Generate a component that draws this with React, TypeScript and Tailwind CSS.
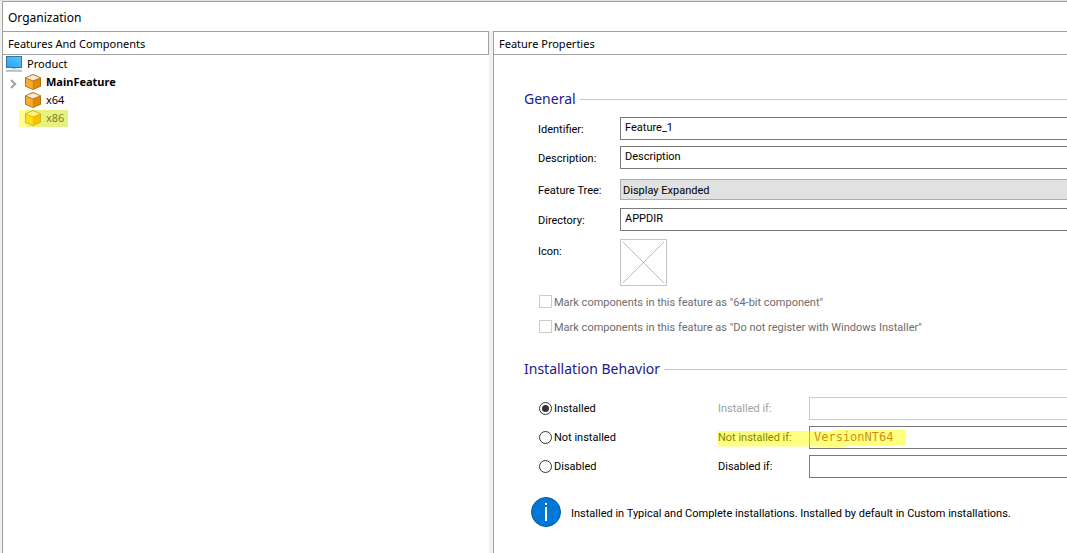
import type { ReactNode } from "react";

function BoxIcon({ marked = false }: { marked?: boolean }) {
  const [top, left, right, edge] = marked
    ? ["#fff37a", "#ffdc1c", "#f4c400", "#dcae10"]
    : ["#fbe9d2", "#f9ab2e", "#e08a00", "#a8681c"];
  return (
    <svg width="16" height="16" viewBox="0 0 16 16" className="shrink-0" aria-hidden="true">
      <path d="M8 0 16 3.400v9L8 16 0 12.400v-9z" fill={edge} />
      <path d="M8 .9 14.800 3.700 8 6.600 1.200 3.700z" fill={top} />
      <path d="M.8 4.300 7.900 7.200v8L.8 12z" fill={left} />
      <path d="M8.100 7.200 15.200 4.300V12l-7.100 3.200z" fill={right} />
    </svg>
  );
}

function MonitorIcon() {
  return (
    <svg width="16" height="16" viewBox="0 0 16 16" className="shrink-0" aria-hidden="true">
      <defs>
        <linearGradient id="screen" x1="0" y1="1" x2="1" y2="0">
          <stop offset="0" stopColor="#2b9df0" />
          <stop offset="1" stopColor="#5cc8fb" />
        </linearGradient>
      </defs>
      <rect x=".5" y=".5" width="15" height="11" fill="url(#screen)" stroke="#39749f" />
      <path d="M6 12h4v1H6z" fill="#b9c6d0" />
      <path d="M2 13h12l2 2H0z" fill="#e3eaee" />
      <path d="M0 14.500h16v1H0z" fill="#7e97a8" />
    </svg>
  );
}

function SectionTitle({ children }: { children: ReactNode }) {
  return (
    <h2 className="flex h-5 items-center gap-1 font-['Noto_Sans',sans-serif] text-[14px] leading-5 text-[#1a1a8c]">
      {children}
      <span className="h-px flex-1 bg-[#c8c8c8]" />
    </h2>
  );
}

const field =
  "block h-[23px] w-full min-w-0 border border-r-0 border-[#7a7a7a] bg-white px-1 pb-[3px] outline-none";

function FormRow({ id, label, children }: { id: string; label: string; children: ReactNode }) {
  return (
    <div className="flex items-center">
      <label htmlFor={id} className="w-[82px] shrink-0 pt-[2px]">
        {label}
      </label>
      {children}
    </div>
  );
}

function Check({ label }: { label: string }) {
  return (
    <label className="flex h-[13px] items-center gap-[2px] text-[#6d6d6d]">
      <input
        type="checkbox"
        disabled
        className="size-[13px] shrink-0 appearance-none border border-[#cccccc] bg-white"
      />
      <span className="pt-[2px]">{label}</span>
    </label>
  );
}

function Radio({ label, checked = false }: { label: string; checked?: boolean }) {
  return (
    <label className="flex w-[179px] shrink-0 items-center gap-[2px]">
      <input
        type="radio"
        name="behavior"
        defaultChecked={checked}
        className="size-[13px] shrink-0 appearance-none rounded-full border border-[#333333] bg-white bg-clip-content p-[2px] checked:bg-[#333333]"
      />
      {label}
    </label>
  );
}

export default function App() {
  return (
    <div className="flex min-h-screen flex-col overflow-hidden border-t border-[#e3e3e3] bg-[#f0f0f0] pl-[2px] font-['Noto_Sans',sans-serif] text-[11px] leading-[14px] text-black">
      <header className="flex h-[30px] items-center border-t border-l border-[#a0a0a0] bg-white pt-[2px] pl-[5px]">
        <h1 className="text-[12px] leading-4">Organization</h1>
      </header>
      <main className="flex flex-1">
        <section className="flex w-[46%] max-w-[487px] shrink-0 flex-col border-l border-[#a0a0a0] bg-white">
          <h2 className="flex h-6 shrink-0 items-center border border-l-0 border-[#a0a0a0] pt-[2px] pl-[5px]">
            Features And Components
          </h2>
          <ul className="flex flex-col pl-[3px]">
            <li className="flex h-[18px] items-center gap-[5px]">
              <MonitorIcon />
              Product
            </li>
            <li className="flex h-[18px] items-center">
              <button type="button" aria-label="Expand MainFeature" className="flex w-[19px] items-center pt-[3px] pl-1">
                <svg width="8" height="10" viewBox="0 0 8 10" fill="none" stroke="#a0a0a0" strokeWidth="2">
                  <path d="M1 1l4.200 4L1 9" />
                </svg>
              </button>
              <BoxIcon />
              <span className="pl-[5px] font-bold">MainFeature</span>
            </li>
            <li className="flex h-[18px] items-center pl-[19px]">
              <BoxIcon />
              <span className="pl-[5px]">x64</span>
            </li>
            <li className="flex h-[18px] items-center pl-[13px]">
              <span className="flex h-[17px] items-center bg-gradient-to-r from-[#ffff90] from-10% to-[#e6f280] to-20% pr-1 pl-[6px] text-[#807f20]">
                <BoxIcon marked />
                <span className="pl-[5px]">x86</span>
              </span>
            </li>
          </ul>
        </section>
        <section className="ml-1 flex min-w-0 flex-1 flex-col border-l border-[#a0a0a0] bg-white">
          <h2 className="flex h-6 shrink-0 items-center border-y border-[#a0a0a0] pt-[2px] pl-[5px]">
            Feature Properties
          </h2>
          <form className="flex flex-col pt-[34px] pl-[30px] font-[Roboto,sans-serif]">
            <SectionTitle>General</SectionTitle>
            <div className="flex flex-col pt-2 pl-[14px]">
              <FormRow id="identifier" label="Identifier:">
                <input id="identifier" defaultValue="Feature_1" className={field} />
              </FormRow>
              <div className="pt-[6px]">
                <FormRow id="description" label="Description:">
                  <input id="description" defaultValue="Description" className={field} />
                </FormRow>
              </div>
              <div className="pt-[10px]">
                <FormRow id="tree" label="Feature Tree:">
                  <select
                    id="tree"
                    className="h-[21px] w-full min-w-0 appearance-none border border-r-0 border-[#adadad] bg-[#e1e1e1] px-[2px] pt-[2px] outline-none"
                  >
                    <option>Display Expanded</option>
                  </select>
                </FormRow>
              </div>
              <div className="pt-2">
                <FormRow id="directory" label="Directory:">
                  <input id="directory" defaultValue="APPDIR" className={field} />
                </FormRow>
              </div>
              <div className="flex items-start pt-2">
                <label htmlFor="icon" className="w-[82px] shrink-0 pt-[6px]">
                  Icon:
                </label>
                <button id="icon" type="button" className="size-[47px] border border-[#c4c4c4]">
                  <svg width="45" height="45" viewBox="0 0 45 45" stroke="#b4b4b4" strokeWidth=".9" aria-hidden="true">
                    <path d="M2 2l41 41M43 2L2 43" />
                  </svg>
                </button>
              </div>
              <div className="flex flex-col gap-3 pt-[9px] pl-px">
                <Check label={'Mark components in this feature as "64-bit component"'} />
                <Check label={'Mark components in this feature as "Do not register with Windows Installer"'} />
              </div>
            </div>
            <div className="pt-[26px]">
              <SectionTitle>Installation Behavior</SectionTitle>
            </div>
            <div className="relative flex flex-col gap-[6px] pt-[18px] pl-[15px]">
              <div className="flex items-center">
                <Radio label="Installed" checked />
                <label htmlFor="installed-if" className="w-[91px] shrink-0 text-[#a0a0a0]">
                  Installed if:
                </label>
                <input
                  id="installed-if"
                  disabled
                  className="block h-[23px] w-full min-w-0 border border-r-0 border-[#cccccc] bg-white px-1"
                />
              </div>
              <div className="flex items-center">
                <Radio label="Not installed" />
                <label htmlFor="not-installed-if" className="w-[91px] shrink-0">
                  Not installed if:
                </label>
                <input
                  id="not-installed-if"
                  defaultValue="VersionNT64"
                  className="block h-[23px] w-full min-w-0 border border-r-0 border-[#7a7a7a] bg-white px-1 pb-px font-['DejaVu_Sans_Mono',monospace] text-[12px] text-[#a31515] outline-none"
                />
              </div>
              <div className="flex items-center">
                <Radio label="Disabled" />
                <label htmlFor="disabled-if" className="w-[91px] shrink-0">
                  Disabled if:
                </label>
                <input id="disabled-if" className={field} />
              </div>
              <svg
                width="190"
                height="20"
                viewBox="0 0 190 20"
                className="pointer-events-none absolute top-[50px] left-[193px]"
                aria-hidden="true"
              >
                <path
                  d="M1 2H105Q113 3 120 1H189V16.500H132Q124 20 112 18.500Q104 17.500 98 17.500H1z"
                  fill="#ffff00"
                  fillOpacity=".5"
                />
              </svg>
            </div>
            <div className="flex items-center gap-[10px] pt-[19px] pl-[7px]">
              <svg width="30" height="30" viewBox="0 0 30 30" className="shrink-0" role="img" aria-label="Information">
                <circle cx="15" cy="15" r="14.500" fill="#0078d7" stroke="#005a9e" />
                <path d="M14 6h2v2h-2zM14 10h2v14h-2z" fill="#fff" />
              </svg>
              <p className="pt-1">
                Installed in Typical and Complete installations. Installed by default in Custom installations.
              </p>
            </div>
          </form>
        </section>
      </main>
    </div>
  );
}
